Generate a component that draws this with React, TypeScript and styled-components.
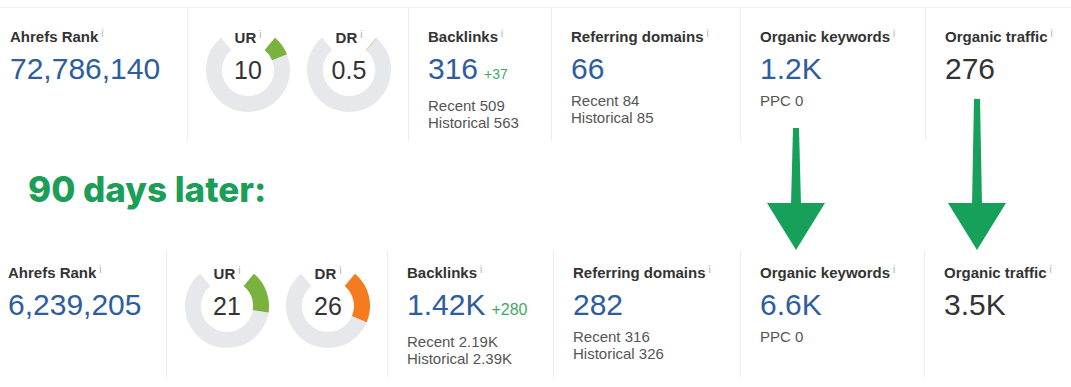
import styled, { createGlobalStyle } from "styled-components";

const GlobalStyle = createGlobalStyle`
  body {
    margin: 0;
    background: #ffffff;
    font-family: "Liberation Sans", Arial, sans-serif;
  }
`;

const Page = styled.div`
  position: relative;
  width: 1071px;
  height: 387px;
  padding-top: 7px;
  box-sizing: border-box;
  overflow: hidden;
  background: #ffffff;
`;

const Row = styled.div<{ $cols: string; $top: boolean }>`
  display: grid;
  grid-template-columns: ${(p) => p.$cols};
  height: ${(p) => (p.$top ? "133px" : "127px")};
  border-top: ${(p) => (p.$top ? "1px solid #efefef" : "none")};
  margin-top: ${(p) => (p.$top ? "0" : "41px")};
`;

const Cell = styled.div<{ $top: boolean }>`
  padding: ${(p) => (p.$top ? "20px" : "14px")} 0 0 19px;
  min-width: 0;

  & + & {
    border-left: 1px solid #ececec;
  }

  &:first-child {
    padding-left: ${(p) => (p.$top ? "10px" : "8px")};
  }
`;

const GaugeCell = styled(Cell)`
  display: flex;
  gap: 17px;
  padding-left: 18px;
`;

const Label = styled.div`
  font-size: 15px;
  line-height: 18px;
  font-weight: 700;
  color: #333333;
  white-space: nowrap;
`;

const Info = styled.span`
  font-size: 10px;
  font-weight: 400;
  color: #b0b0b0;
  vertical-align: top;
  margin-left: 3px;
  line-height: 11px;
`;

const Value = styled.div<{ $dark?: boolean }>`
  margin-top: 6px;
  font-size: 30px;
  line-height: 34px;
  color: ${(p) => (p.$dark ? "#333333" : "#2d5d9f")};
  white-space: nowrap;
`;

const Delta = styled.span<{ $size: number }>`
  font-size: ${(p) => p.$size}px;
  color: #3fa863;
  margin-left: 6px;
`;

const Sub = styled.div`
  margin-top: 6px;
  font-size: 15px;
  line-height: 17px;
  color: #555555;
  white-space: nowrap;
`;

const Heading = styled.h2`
  margin: 28px 0 0 28px;
  font-family: Inter, "Liberation Sans", sans-serif;
  font-size: 35px;
  line-height: 40px;
  font-weight: 800;
  color: #1d9e58;
`;

const Gauge = styled.div`
  position: relative;
  width: 84px;
  height: 84px;
  display: flex;
  align-items: center;
  justify-content: center;
`;

const GaugeSvg = styled.svg`
  position: absolute;
  inset: 0;
`;

const GaugeLabel = styled(Label)`
  position: absolute;
  top: 1px;
  left: 0;
  right: 0;
  text-align: center;
`;

const GaugeNumber = styled.span`
  position: relative;
  font-size: 25px;
  color: #333333;
`;

const ArrowBox = styled.svg`
  position: absolute;
`;

const pt = (a: number, r: number) => {
  const rad = (a * Math.PI) / 180;
  return `${(42 + r * Math.sin(rad)).toFixed(2)} ${(42 - r * Math.cos(rad)).toFixed(2)}`;
};

const arc = (from: number, to: number) => {
  const large = to - from > 180 ? 1 : 0;
  return `M ${pt(from, 34)} A 34 34 0 ${large} 1 ${pt(to, 34)}`;
};

const Ring = ({ name, value, color }: { name: string; value: number; color: string }) => (
  <Gauge>
    <GaugeSvg width="84" height="84" viewBox="0 0 84 84">
      <path d={arc(40, 320)} fill="none" stroke="#e6e8eb" strokeWidth="16" />
      <path d={arc(40, 40 + Math.max((280 * value) / 100, 1.2))} fill="none" stroke={color} strokeWidth="16" />
    </GaugeSvg>
    <GaugeLabel>
      {name}
      <Info>i</Info>
    </GaugeLabel>
    <GaugeNumber>{value}</GaugeNumber>
  </Gauge>
);

const Arrow = ({ left, top, height }: { left: number; top: number; height: number }) => (
  <ArrowBox width="58" height={height} viewBox={`0 0 58 ${height}`} style={{ left, top }}>
    <polygon points={`26,0 32,0 34,${height - 45} 24,${height - 45}`} fill="#17a05a" />
    <polygon points={`0,${height - 47} 58,${height - 47} 29,${height}`} fill="#17a05a" />
  </ArrowBox>
);

interface Stats {
  rank: string;
  ur: number;
  dr: number;
  backlinks: string;
  delta: string;
  deltaSize: number;
  recentLinks: string;
  historicalLinks: string;
  domains: string;
  recentDomains: string;
  historicalDomains: string;
  keywords: string;
  traffic: string;
}

const before: Stats = {
  rank: "72,786,140",
  ur: 10,
  dr: 0.5,
  backlinks: "316",
  delta: "+37",
  deltaSize: 14,
  recentLinks: "509",
  historicalLinks: "563",
  domains: "66",
  recentDomains: "84",
  historicalDomains: "85",
  keywords: "1.2K",
  traffic: "276",
};

const after: Stats = {
  rank: "6,239,205",
  ur: 21,
  dr: 26,
  backlinks: "1.42K",
  delta: "+280",
  deltaSize: 16,
  recentLinks: "2.19K",
  historicalLinks: "2.39K",
  domains: "282",
  recentDomains: "316",
  historicalDomains: "326",
  keywords: "6.6K",
  traffic: "3.5K",
};

const StatsRow = ({ data, cols, top }: { data: Stats; cols: string; top: boolean }) => (
  <Row $cols={cols} $top={top}>
    <Cell $top={top}>
      <Label>
        Ahrefs Rank<Info>i</Info>
      </Label>
      <Value>{data.rank}</Value>
    </Cell>
    <GaugeCell $top={top}>
      <Ring name="UR" value={data.ur} color="#7ab23e" />
      <Ring name="DR" value={data.dr} color={top ? "#f0c89a" : "#f47b20"} />
    </GaugeCell>
    <Cell $top={top}>
      <Label>
        Backlinks<Info>i</Info>
      </Label>
      <Value>
        {data.backlinks}
        <Delta $size={data.deltaSize}>{data.delta}</Delta>
      </Value>
      <Sub>
        Recent {data.recentLinks}
        <br />
        Historical {data.historicalLinks}
      </Sub>
    </Cell>
    <Cell $top={top}>
      <Label>
        Referring domains<Info>i</Info>
      </Label>
      <Value>{data.domains}</Value>
      <Sub>
        Recent {data.recentDomains}
        <br />
        Historical {data.historicalDomains}
      </Sub>
    </Cell>
    <Cell $top={top}>
      <Label>
        Organic keywords<Info>i</Info>
      </Label>
      <Value>{data.keywords}</Value>
      <Sub>PPC 0</Sub>
    </Cell>
    <Cell $top={top}>
      <Label>
        Organic traffic<Info>i</Info>
      </Label>
      <Value $dark>{data.traffic}</Value>
    </Cell>
  </Row>
);

const App: React.FC = () => (
  <>
    <GlobalStyle />
    <Page>
      <StatsRow data={before} cols="187px 221px 143px 189px 185px 1fr" top />
      <Heading>90 days later:</Heading>
      <StatsRow data={after} cols="166px 221px 166px 187px 184px 1fr" top={false} />
      <Arrow left={767} top={128} height={122} />
      <Arrow left={948} top={99} height={151} />
    </Page>
  </>
);

export default App;
